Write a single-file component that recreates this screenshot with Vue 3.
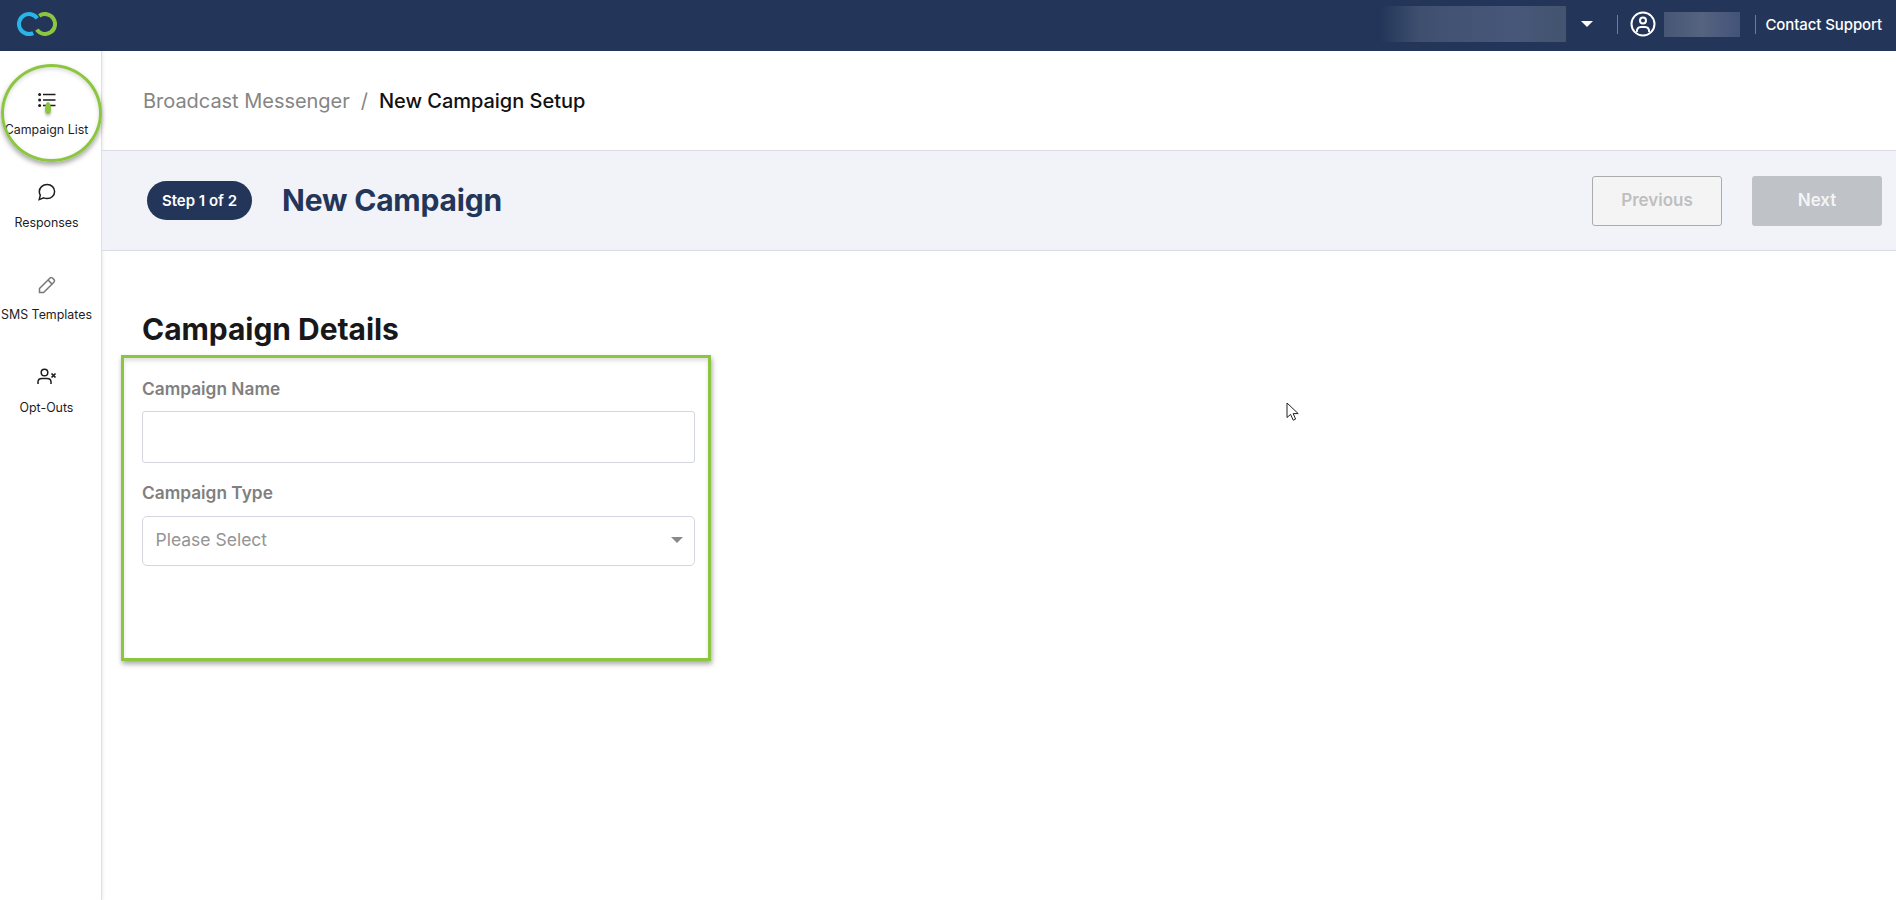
<script setup>
const navItems = [
  { label: 'Campaign List', icon: 'list' },
  { label: 'Responses', icon: 'chat' },
  { label: 'SMS Templates', icon: 'pencil' },
  { label: 'Opt-Outs', icon: 'optout' },
]
</script>

<template>
  <div class="app">
    <header class="topbar">
      <svg class="logo" width="40" height="24" viewBox="0 0 40 24" fill="none" stroke-width="4">
        <path d="M20.2 6.3A10 10 0 1 0 16.2 21.1" stroke="#29b5e8"/>
        <path d="M22.3 3.8A10 10 0 1 1 19.8 17.7" stroke="#8cc63f"/>
      </svg>
      <div class="top-right">
        <div class="blur blur-account"></div>
        <span class="caret"></span>
        <span class="divider first"></span>
        <svg class="user" width="26" height="26" viewBox="0 0 26 26" fill="none" stroke="#fff" stroke-width="2">
          <circle cx="13" cy="13" r="11.5"/>
          <circle cx="13" cy="9.5" r="3"/>
          <path d="M6.8 21C6.8 17.6 8.6 16 11 16H15C17.4 16 19.2 17.6 19.2 21"/>
        </svg>
        <div class="blur blur-user"></div>
        <span class="divider second"></span>
        <span class="support">Contact Support</span>
      </div>
    </header>

    <div class="body">
      <nav class="sidebar">
        <a v-for="item in navItems" :key="item.label" class="nav-item" :class="`nav-${item.icon}`">
          <svg v-if="item.icon === 'list'" class="list-icon" width="18" height="14" viewBox="0 0 18 14" fill="none" stroke="#1d1d1f" stroke-width="1.5">
            <path d="M5 1.5H17.5M5 7H17.5M5 12.5H17.5"/>
            <circle cx="1.6" cy="1.5" r="1.5" fill="#1d1d1f" stroke="none"/>
            <circle cx="1.6" cy="7" r="1.5" fill="#1d1d1f" stroke="none"/>
            <circle cx="1.6" cy="12.5" r="1.5" fill="#1d1d1f" stroke="none"/>
          </svg>
          <svg v-else-if="item.icon === 'chat'" width="20" height="20" viewBox="0 0 20 20" fill="none" stroke="#1d1d1f" stroke-width="1.5">
            <path d="M2.2 17.6L3.3 13.2C2.6 12 2.3 10.9 2.3 9.8C2.3 5.7 5.6 2.6 10.2 2.6C14.6 2.6 17.6 5.6 17.6 9.5C17.6 13.5 14.4 16.6 10 16.6C8.8 16.6 7.7 16.3 6.7 15.9L2.2 17.6Z"/>
          </svg>
          <svg v-else-if="item.icon === 'pencil'" width="20" height="20" viewBox="0 0 20 20" fill="none" stroke="#77787a" stroke-width="1.5">
            <path d="M2.5 13.5L12.8 3.2C13.6 2.4 14.6 2.4 15.4 3L17 4.6C17.7 5.4 17.7 6.4 16.9 7.2L6.6 17.5H2.5V13.5Z"/>
            <path d="M11 5L15.1 9.1"/>
          </svg>
          <svg v-else width="20" height="20" viewBox="0 0 20 20" fill="none" stroke="#1d1d1f" stroke-width="1.5">
            <circle cx="7.5" cy="5.5" r="3.3"/>
            <path d="M1 17V15C1 12.8 2.8 11.5 5 11.5H10C12.2 11.5 14 12.8 14 15V17"/>
            <path d="M14.5 6.5L18.5 10.5M18.5 6.5L14.5 10.5" stroke-width="1.7"/>
          </svg>
          <span>{{ item.label }}</span>
        </a>
      </nav>

      <main class="main">
        <div class="crumbs">
          <span class="crumb-root">Broadcast Messenger</span>
          <span class="crumb-sep">/</span>
          <span class="crumb-current">New Campaign Setup</span>
        </div>
        <div class="band">
          <span class="step">Step 1 of 2</span>
          <h1>New Campaign</h1>
          <div class="actions">
            <button class="btn prev" disabled>Previous</button>
            <button class="btn next" disabled>Next</button>
          </div>
        </div>
        <section class="details">
          <h2>Campaign Details</h2>
          <label class="field-label label-name">Campaign Name</label>
          <div class="input"></div>
          <label class="field-label label-type">Campaign Type</label>
          <div class="select">
            <span>Please Select</span>
            <i class="select-caret"></i>
          </div>
        </section>
      </main>
    </div>

    <div class="mark-circle"></div>
    <div class="mark-arrow"></div>
    <div class="mark-rect"></div>
    <svg class="cursor" width="14" height="20" viewBox="0 0 14 20">
      <path d="M1 1V15.5L4.6 12.4L7.2 18.2L9.6 17.1L7.2 11.6H12.2L1 1Z" fill="#fff" stroke="#222" stroke-width="1"/>
    </svg>
  </div>
</template>

<style scoped>
.app {
  position: relative;
  width: 1896px;
  height: 900px;
  overflow: hidden;
  background: #fff;
  font-family: Inter, "Liberation Sans", sans-serif;
}
.topbar {
  height: 51px;
  background: #233659;
  display: flex;
  align-items: center;
  justify-content: space-between;
  padding: 0 14px 3px 17px;
  box-sizing: border-box;
}
.top-right { display: flex; align-items: center; }
.blur-account {
  width: 186px;
  height: 36px;
  background: linear-gradient(90deg, #233659 0%, #3f506f 22%, #46577a 70%, #43546f 100%);
}
.caret {
  margin-left: 15px;
  border-left: 6px solid transparent;
  border-right: 6px solid transparent;
  border-top: 6px solid #fff;
}
.divider { width: 1px; height: 19px; background: #6f7c94; }
.divider.first { margin-left: 24px; margin-right: 12px; }
.user { flex: none; }
.blur-user {
  width: 76px;
  height: 25px;
  margin-left: 8px;
  background: linear-gradient(90deg, #465674, #55637f 50%, #43537a);
}
.divider.second { margin-left: 15px; margin-right: 9px; }
.support { color: #fff; font-size: 15px; font-weight: 500; letter-spacing: -0.1px; white-space: nowrap; }

.body { display: flex; height: 849px; }
.sidebar {
  width: 102px;
  flex: none;
  box-sizing: border-box;
  border-right: 1px solid #dfe0e4;
  box-shadow: 1px 0 3px rgba(0,0,0,.08);
  display: flex;
  flex-direction: column;
  align-items: center;
  padding: 38px 8px 0 0;
}
.nav-item {
  width: 100%;
  height: 92.5px;
  display: flex;
  flex-direction: column;
  align-items: center;
  gap: 13px;
  font-size: 12.4px;
  color: #1d1d1f;
  white-space: nowrap;
}
.nav-list { gap: 15px; height: 93px; }
.list-icon { margin-top: 4px; }
.nav-pencil { gap: 12px; }
.main { flex: 1; min-width: 0; display: flex; flex-direction: column; }
.crumbs {
  height: 99px;
  box-sizing: border-box;
  padding: 0 0 0 41px;
  display: flex;
  align-items: center;
  font-size: 20px;
  line-height: 24px;
}
.crumb-root { color: #858585; letter-spacing: -0.03px; }
.crumb-sep { color: #858585; margin: 0 11px; }
.crumb-current { color: #111; font-weight: 500; letter-spacing: -0.03px; }
.band {
  height: 101px;
  box-sizing: border-box;
  background: #f1f3f8;
  border-top: 1px solid #d9dce6;
  border-bottom: 1px solid #d9dce6;
  display: flex;
  align-items: center;
  padding: 0 14px 0 45px;
}
.step {
  width: 105px;
  height: 39px;
  border-radius: 20px;
  background: #233659;
  color: #fff;
  font-size: 15px;
  font-weight: 600;
  display: flex;
  align-items: center;
  justify-content: center;
  white-space: nowrap;
}
h1 {
  margin: 0 0 2px 30px;
  font-size: 30px;
  font-weight: 700;
  letter-spacing: -0.2px;
  color: #233659;
  white-space: nowrap;
}
.actions { margin-left: auto; display: flex; gap: 30px; }
.btn {
  width: 130px;
  height: 50px;
  box-sizing: border-box;
  border-radius: 3px;
  font: 600 17px Inter, "Liberation Sans", sans-serif;
  padding: 0 0 2px;
}
.prev { background: #f4f4f5; border: 1px solid #aaabad; color: #bfbfbf; }
.next { background: #bfc2c7; border: none; color: #f4f4f5; }
.details { padding: 60px 0 0 40px; width: 553px; }
h2 {
  margin: 0;
  font-size: 30px;
  line-height: 36px;
  font-weight: 700;
  letter-spacing: -0.05px;
  color: #18181b;
  white-space: nowrap;
}
.field-label {
  display: block;
  font-size: 17.3px;
  line-height: 20px;
  font-weight: 600;
  color: #808080;
}
.label-name { margin-top: 32px; }
.label-type { margin-top: 20px; }
.input {
  margin-top: 12px;
  height: 52px;
  box-sizing: border-box;
  border: 1px solid #d3d6e0;
  border-radius: 3px;
}
.select {
  margin-top: 13px;
  height: 50px;
  box-sizing: border-box;
  border: 1px solid #d3d6e0;
  border-radius: 5px;
  display: flex;
  align-items: center;
  justify-content: space-between;
  padding: 0 11px 4px 12.5px;
  font-size: 17.5px;
  color: #949494;
}
.select-caret {
  margin-top: 2px;
  border-left: 6px solid transparent;
  border-right: 6px solid transparent;
  border-top: 6px solid #8a8a8a;
}
.mark-circle {
  position: absolute;
  left: 1px;
  top: 64px;
  width: 101px;
  height: 98px;
  box-sizing: border-box;
  border: 3.5px solid #8cc63f;
  border-radius: 50%;
  box-shadow: 0 3px 5px rgba(0,0,0,.35), inset 0 2px 4px rgba(0,0,0,.15);
}
.mark-arrow {
  position: absolute;
  left: 45px;
  top: 102px;
  width: 6px;
  height: 12px;
  border-radius: 50% 50% 40% 40% / 60% 60% 40% 40%;
  background: #8cc63f;
  box-shadow: 0 2px 3px rgba(0,0,0,.25);
}
.mark-rect {
  position: absolute;
  left: 121px;
  top: 355px;
  width: 590px;
  height: 306px;
  box-sizing: border-box;
  border: 3px solid #8cc63f;
  box-shadow: 1px 3px 5px rgba(0,0,0,.35), inset 0 3px 4px rgba(0,0,0,.12);
}
.cursor { position: absolute; left: 1286px; top: 402px; }
</style>
